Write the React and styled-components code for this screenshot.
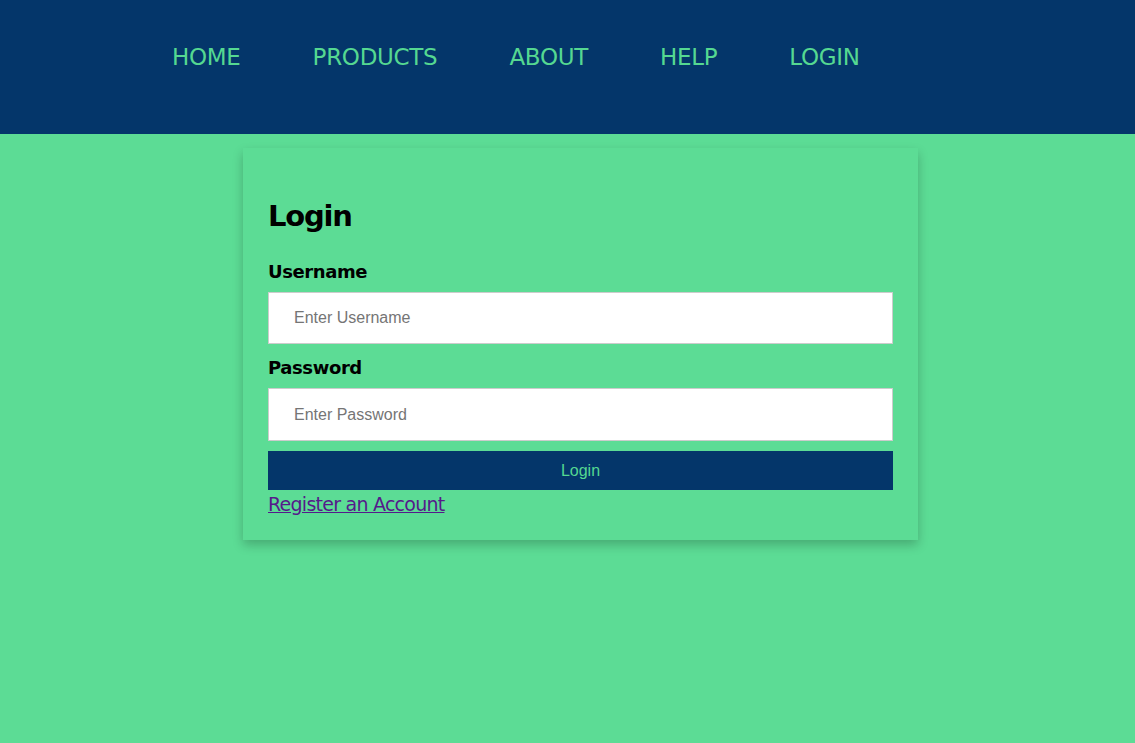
import React from 'react';
import styled, { createGlobalStyle } from 'styled-components';

const GlobalStyle = createGlobalStyle`
  html, body {
    margin: 0;
    padding: 0;
    background-color: #5cdc95;
    font-family: "DejaVu Sans", Verdana, sans-serif;
  }
`;

const NavBar = styled.div`
  background-color: #04366a;
  height: 134px;
  box-sizing: border-box;
  padding: 39px 0 0 136px;
`;

const NavList = styled.ul`
  display: flex;
  list-style: none;
  margin: 0;
  padding: 0;
`;

const NavItem = styled.li`
  padding: 0 36px;
  font-size: 23px;
  line-height: 36px;
  letter-spacing: -0.3px;
  color: #55d891;
`;

const Card = styled.div`
  width: 675px;
  margin: 14px 0 40px 243px;
  box-sizing: border-box;
  padding: 50px 25px 23px;
  background-color: #5cdc95;
  box-shadow: 0 5px 10px rgba(0, 0, 0, 0.22);
`;

const Title = styled.h2`
  margin: 0 0 26px;
  font-size: 29px;
  line-height: 36px;
  font-weight: bold;
  letter-spacing: -1.2px;
  color: #000;
`;

const Label = styled.label`
  display: block;
  font-size: 18px;
  line-height: 24px;
  font-weight: bold;
  color: #000;
  margin-bottom: 8px;
  letter-spacing: -0.4px;
`;

const Input = styled.input`
  display: block;
  width: 100%;
  box-sizing: border-box;
  height: ${p => p.$h}px;
  border: 1px solid #ccc;
  padding: 0 25px;
  margin-bottom: ${p => p.$mb}px;
  font-family: "Liberation Sans", Arial, sans-serif;
  font-size: 16px;
  outline: none;
  &::placeholder {
    color: #757575;
  }
`;

const Button = styled.button`
  display: block;
  width: 100%;
  height: 39px;
  border: none;
  background-color: #04366a;
  color: #55d891;
  font-family: "Liberation Sans", Arial, sans-serif;
  font-size: 16px;
  cursor: pointer;
`;

const RegisterLink = styled.a`
  display: inline-block;
  margin-top: 1px;
  font-size: 19px;
  line-height: 26px;
  letter-spacing: -0.75px;
  color: #551a8b;
  text-decoration: underline;
`;

export default function App() {
  const links = ['HOME', 'PRODUCTS', 'ABOUT', 'HELP', 'LOGIN'];
  return (
    <>
      <GlobalStyle />
      <NavBar>
        <NavList>
          {links.map(l => (
            <NavItem key={l}>{l}</NavItem>
          ))}
        </NavList>
      </NavBar>
      <Card>
        <Title>Login</Title>
        <Label>Username</Label>
        <Input $h={52} $mb={12} placeholder="Enter Username" />
        <Label>Password</Label>
        <Input $h={53} $mb={10} placeholder="Enter Password" type="password" />
        <Button>Login</Button>
        <RegisterLink href="#">Register an Account</RegisterLink>
      </Card>
    </>
  );
}
